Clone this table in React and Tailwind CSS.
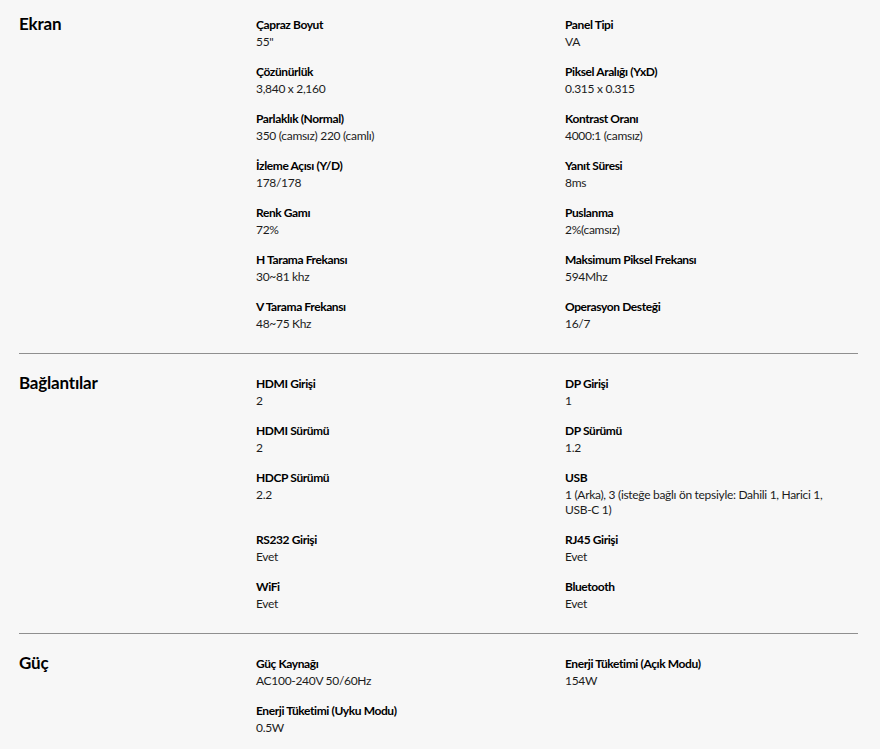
import React from 'react';

const sections = [
  {
    title: 'Ekran',
    items: [
      ['Çapraz Boyut', '55"'],
      ['Panel Tipi', 'VA'],
      ['Çözünürlük', '3,840 x 2,160'],
      ['Piksel Aralığı (YxD)', '0.315 x 0.315'],
      ['Parlaklık (Normal)', '350 (camsız) 220 (camlı)'],
      ['Kontrast Oranı', '4000:1 (camsız)'],
      ['İzleme Açısı (Y/D)', '178/178'],
      ['Yanıt Süresi', '8ms'],
      ['Renk Gamı', '72%'],
      ['Puslanma', '2%(camsız)'],
      ['H Tarama Frekansı', '30~81 khz'],
      ['Maksimum Piksel Frekansı', '594Mhz'],
      ['V Tarama Frekansı', '48~75 Khz'],
      ['Operasyon Desteği', '16/7'],
    ],
  },
  {
    title: 'Bağlantılar',
    items: [
      ['HDMI Girişi', '2'],
      ['DP Girişi', '1'],
      ['HDMI Sürümü', '2'],
      ['DP Sürümü', '1.2'],
      ['HDCP Sürümü', '2.2'],
      ['USB', '1 (Arka), 3 (isteğe bağlı ön tepsiyle: Dahili 1, Harici 1, USB-C 1)'],
      ['RS232 Girişi', 'Evet'],
      ['RJ45 Girişi', 'Evet'],
      ['WiFi', 'Evet'],
      ['Bluetooth', 'Evet'],
    ],
  },
  {
    title: 'Güç',
    items: [
      ['Güç Kaynağı', 'AC100-240V 50/60Hz'],
      ['Enerji Tüketimi (Açık Modu)', '154W'],
      ['Enerji Tüketimi (Uyku Modu)', '0.5W'],
    ],
  },
];

function SpecSection({ title, items, first, last }) {
  return (
    <div
      className={
        (first ? 'pt-[16px] ' : 'pt-[21px] ') +
        (last ? 'flex pb-[22px]' : 'flex pb-[22px] border-b border-[#8f8f8f]')
      }
    >
      <h3 className="w-[237px] shrink-0 -mt-[1px] text-[17px] leading-[17px] font-bold text-black tracking-[-0.2px]">
        {title}
      </h3>
      <div className="grid flex-1 grid-cols-[309px_1fr] gap-y-[14px]">
        {items.map(([label, value]) => (
          <div key={label} className="pr-[30px]">
            <p className="text-[12px] leading-[18px] font-bold text-black tracking-[-0.4px]">{label}</p>
            <p className="text-[12px] leading-[15px] text-[#1c1c1c] tracking-[-0.3px]">{value}</p>
          </div>
        ))}
      </div>
    </div>
  );
}

export default function App() {
  return (
    <div className="min-h-[749px] bg-[#f7f7f7] pl-[19px] pr-[22px] [font-family:Lato,sans-serif]">
      {sections.map((s, i) => (
        <SpecSection key={s.title} {...s} first={i === 0} last={i === sections.length - 1} />
      ))}
    </div>
  );
}
